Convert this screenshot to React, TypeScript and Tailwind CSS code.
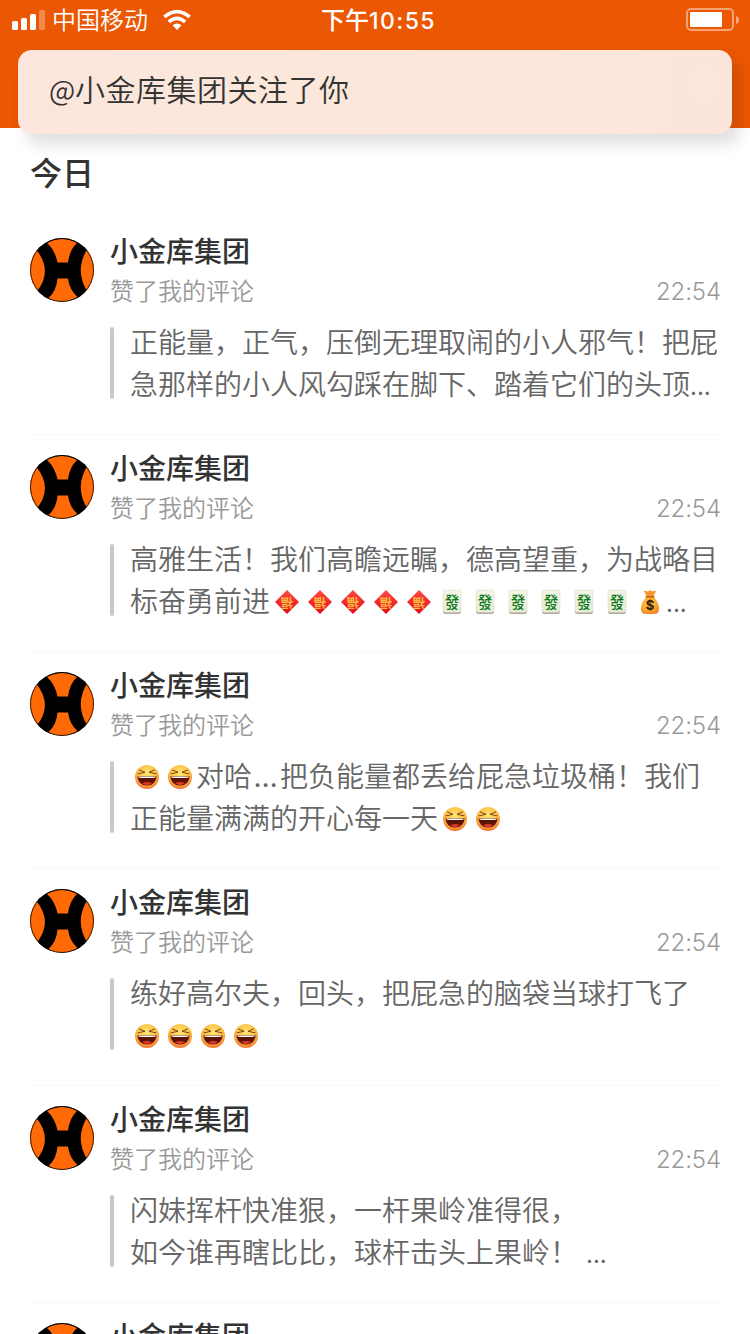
import type { ReactNode } from "react";
import { Settings } from "lucide-react";

interface Notice {
  id: number;
  name: string;
  action: string;
  time: string;
  lines: ReactNode[];
}

function Avatar() {
  return (
    <svg viewBox="0 0 64 64" className="w-16 h-16 rounded-full shrink-0">
      <rect width="64" height="64" fill="#000" />
      <g fill="#ff6a06">
        <path d="M6.500 12 Q22.500 32 8 52 L-4 52 V12Z" />
        <path d="M58 10 Q44 31.500 57 53 L68 53 V10Z" />
        <path d="M17 5 Q32 -3 47 5 Q39.500 12 38 24.500 H27.500 Q25 12 17 5Z" />
        <path d="M18.500 60 Q26.500 53 27.500 40.500 H38 Q39.500 52 47.500 59 Q32 68 18.500 60Z" />
      </g>
      <circle cx="32" cy="32" r="31.500" fill="none" stroke="#000" strokeOpacity="0.700" />
    </svg>
  );
}

function Emoji({ children }: { children: ReactNode }) {
  return (
    <span className="inline-flex w-[33px] h-6 justify-center align-[-2px]">
      <svg viewBox="0 0 24 24" className="w-6 h-6 overflow-visible">{children}</svg>
    </span>
  );
}

function Laugh() {
  return (
    <Emoji>
      <defs>
        <radialGradient id="laugh-face" cx="0.5" cy="0.35" r="0.65">
          <stop offset="0" stopColor="#ffe873" />
          <stop offset="0.6" stopColor="#fdc044" />
          <stop offset="1" stopColor="#f4732e" />
        </radialGradient>
      </defs>
      <circle cx="12" cy="12" r="12" fill="url(#laugh-face)" />
      <path d="M4.500 5 L10 7.300 L3 8.800 M19.500 5 L14 7.300 L21 8.800" fill="none" stroke="#6b3410" strokeWidth="0.900" strokeLinecap="round" strokeLinejoin="round" />
      <path d="M2.300 11.500 Q12 11 21.700 11.500 Q20.500 20.500 12 20.500 Q3.500 20.500 2.300 11.500Z" fill="#5c1206" />
      <path d="M3.300 11.800 Q12 11.300 20.700 11.800 L20.200 12.700 Q12 13.300 3.800 12.700Z" fill="#fff" />
      <path d="M7 18.300 Q12 15.500 17 18.300 Q12 21.800 7 18.300Z" fill="#e2352a" />
    </Emoji>
  );
}

function Fu() {
  return (
    <Emoji>
      <defs>
        <linearGradient id="fu-paper" x1="0" y1="0" x2="0" y2="1">
          <stop offset="0" stopColor="#ff4a42" />
          <stop offset="1" stopColor="#e60a18" />
        </linearGradient>
      </defs>
      <path d="M12 0 L24 12 L12 24 L0 12Z" fill="url(#fu-paper)" />
      <text x="12" y="16.500" textAnchor="middle" fontSize="12.500" fontWeight="700" fill="#fbb940" transform="rotate(180 12 12)">
        福
      </text>
    </Emoji>
  );
}

function Fa() {
  return (
    <Emoji>
      <defs>
        <linearGradient id="fa-tile" x1="0" y1="0" x2="0" y2="1">
          <stop offset="0" stopColor="#f6f5e6" />
          <stop offset="1" stopColor="#e8e8d4" />
        </linearGradient>
      </defs>
      <rect x="3" y="1" width="18" height="22.700" rx="2" fill="#8f8f7e" />
      <rect x="3" y="0" width="18" height="22.500" rx="2" fill="url(#fa-tile)" stroke="#d6d6c4" strokeWidth="0.500" />
      <text x="12" y="16" textAnchor="middle" fontSize="14.500" fontWeight="500" fill="#0a7a1a" transform="scale(1 1.120)">
        發
      </text>
    </Emoji>
  );
}

function MoneyBag() {
  return (
    <Emoji>
      <defs>
        <radialGradient id="bag-body" cx="0.45" cy="0.4" r="0.7">
          <stop offset="0" stopColor="#ffcf45" />
          <stop offset="0.6" stopColor="#fda62d" />
          <stop offset="1" stopColor="#f47a28" />
        </radialGradient>
      </defs>
      <path d="M9 7 L6 1 Q8 0.500 9.500 1.800 Q12 -0.800 14.500 1.500 Q16.500 0.300 18 1.300 L15 7Z" fill="#f9952b" />
      <path d="M8.500 6.500 H15.500 Q21 13 21 18.500 Q21 24 16 24 H8 Q3 24 3 18.500 Q3 13 8.500 6.500Z" fill="url(#bag-body)" />
      <path d="M8.300 6.800 H15.700" stroke="#c65a17" strokeWidth="1.600" strokeLinecap="round" />
      <text x="12" y="20" textAnchor="middle" fontFamily="Inter, sans-serif" fontSize="13" fontWeight="800" fill="#3d2408">
        $
      </text>
    </Emoji>
  );
}

function More() {
  return <span className="font-[Inter,sans-serif] font-normal text-[24px] leading-none">...</span>;
}

const NOTICES: Notice[] = [
  {
    id: 1,
    name: "小金库集团",
    action: "赞了我的评论",
    time: "22:54",
    lines: ["正能量，正气，压倒无理取闹的小人邪气！把屁", <>急那样的小人风勾踩在脚下、踏着它们的头顶<More /></>],
  },
  {
    id: 2,
    name: "小金库集团",
    action: "赞了我的评论",
    time: "22:54",
    lines: [
      "高雅生活！我们高瞻远瞩，德高望重，为战略目",
      <>标奋勇前进<Fu /><Fu /><Fu /><Fu /><Fu /><Fa /><Fa /><Fa /><Fa /><Fa /><Fa /><MoneyBag /><More /></>,
    ],
  },
  {
    id: 3,
    name: "小金库集团",
    action: "赞了我的评论",
    time: "22:54",
    lines: [
      <><Laugh /><Laugh />对哈<span className="inline-block w-7 text-center font-[Inter,sans-serif] font-normal leading-none tracking-[1px]">…</span>把负能量都丢给屁急垃圾桶！我们</>,
      <>正能量满满的开心每一天<Laugh /><Laugh /></>,
    ],
  },
  {
    id: 4,
    name: "小金库集团",
    action: "赞了我的评论",
    time: "22:54",
    lines: ["练好高尔夫，回头，把屁急的脑袋当球打飞了", <><Laugh /><Laugh /><Laugh /><Laugh /></>],
  },
  {
    id: 5,
    name: "小金库集团",
    action: "赞了我的评论",
    time: "22:54",
    lines: ["闪妹挥杆快准狠，一杆果岭准得很，", <>如今谁再瞎比比，球杆击头上果岭！<span className="ml-2"><More /></span></>],
  },
  {
    id: 6,
    name: "小金库集团",
    action: "赞了我的评论",
    time: "22:54",
    lines: ["", ""],
  },
];

function StatusBar() {
  return (
    <div className="grid grid-cols-3 items-center h-10 pl-3 pr-[11px] text-white text-[24px] leading-9">
      <div className="flex items-center">
        <svg viewBox="0 0 34 20" className="w-[34px] h-5 mr-1.5" fill="#fff">
          <rect x="0" y="11" width="6" height="9" rx="1.500" />
          <rect x="9" y="8" width="6" height="12" rx="1.500" />
          <rect x="18" y="4" width="6" height="16" rx="1.500" />
          <rect x="27" y="0" width="6" height="20" rx="1.500" opacity="0.300" />
        </svg>
        <span className="-mt-0.5 font-[350]">中国移动</span>
        <svg viewBox="0 0 28 20" className="w-7 h-5 ml-[15px]" fill="none" stroke="#fff" strokeWidth="3.600">
          <path d="M1.300 6.800 Q14 -3.500 26.700 6.800" />
          <path d="M5.800 11.800 Q14 5 22.200 11.800" />
          <path d="M14 20 L9.500 15.300 Q14 11.800 18.500 15.300Z" fill="#fff" stroke="none" />
        </svg>
      </div>
      <div className="text-center font-medium whitespace-nowrap pl-1.5">
        下午<span className="font-[Inter,sans-serif] text-[23px] tracking-[1.4px]">10:55</span>
      </div>
      <svg viewBox="0 0 53 24" className="w-[53px] h-6 justify-self-end">
        <rect x="1" y="1" width="46" height="21" rx="4" fill="none" stroke="#fff" strokeOpacity="0.450" strokeWidth="2" />
        <rect x="4" y="4" width="32" height="15" rx="1" fill="#fff" />
        <path d="M50 8 Q53 9 53 12 Q53 15 50 16Z" fill="#fff" fillOpacity="0.500" />
      </svg>
    </div>
  );
}

function NoticeRow({ notice }: { notice: Notice }) {
  return (
    <div className="h-[217px] shrink-0 flex pt-5 border-b border-[#f7f7f7]">
      <Avatar />
      <div className="flex-1 ml-4">
        <div className="-mt-2 h-10 text-[28px] leading-10 font-medium text-[#333]">{notice.name}</div>
        <div className="flex justify-between h-10 text-[24px] leading-10 text-[#999]">
          <span className="font-[350]">{notice.action}</span>
          <span className="pt-0.5 -mr-px font-[Inter,sans-serif] font-light tracking-[-0.1px]">{notice.time}</span>
        </div>
        <div className="flex mt-2.5">
          <div className="w-1 h-[72px] mt-[7px] mr-4 rounded-full bg-[#c8c9cc]" />
          <div className="text-[28px] font-[350] text-[#666] whitespace-nowrap">
            {notice.lines.map((line, i) => (
              <div key={i} className="h-[42px] leading-[42px]">{line}</div>
            ))}
          </div>
        </div>
      </div>
    </div>
  );
}

export default function App() {
  return (
    <div lang="zh-CN" className="relative w-[750px] h-[1334px] overflow-hidden flex flex-col bg-white font-['Noto_Sans_CJK_SC',sans-serif]">
      <header className="h-32 shrink-0 bg-[#eb5703]">
        <StatusBar />
      </header>

      {/* Push banner, floats over the header */}
      <div className="absolute left-[18px] top-[50px] w-[714px] h-[84px] rounded-[14px] flex items-center justify-between pl-[31px] pr-2 bg-linear-to-r from-[#fce6dd] via-[#fce8da] to-[#fce6db] shadow-[8px_10px_16px_rgba(0,0,0,0.13)]">
        <span className="text-[30px] leading-[44px] tracking-[0.5px] font-[350] text-[#333] pb-2">
          <span className="inline-block w-[26px] text-[28px] tracking-normal">@</span>小金库集团关注了你
        </span>
        <Settings size={40} strokeWidth={1.5} className="mb-4 text-white opacity-10" />
      </div>

      <h2 className="h-[90px] shrink-0 pl-[30px] pt-5 text-[32px] leading-[46px] font-medium text-[#333]">今日</h2>

      <main className="flex flex-col px-[30px]">
        {NOTICES.map((notice) => (
          <NoticeRow key={notice.id} notice={notice} />
        ))}
      </main>
    </div>
  );
}
